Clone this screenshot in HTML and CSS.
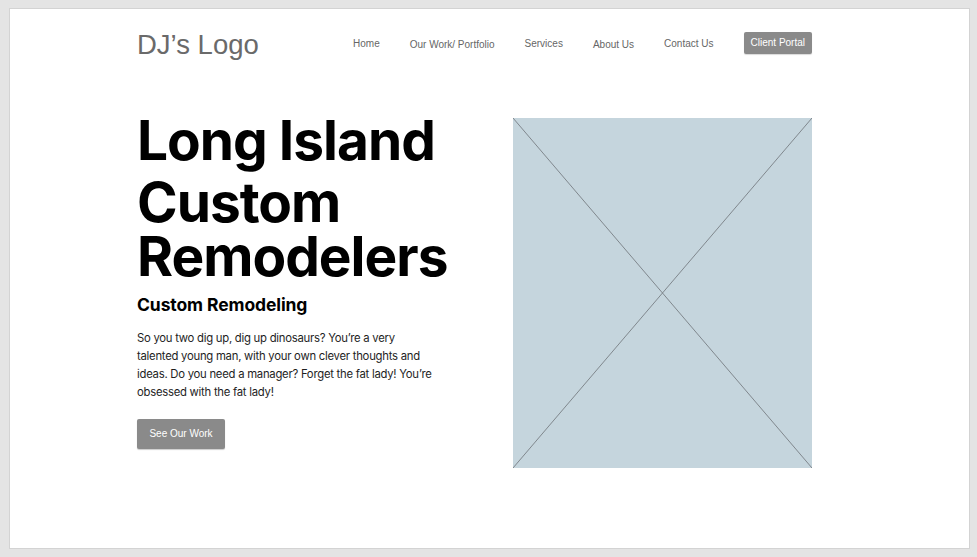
FILE: index.html
```html
<!DOCTYPE html>
<html lang="en">
<head>
<meta charset="utf-8">
<title>DJ's Logo</title>
<link rel="stylesheet" href="styles.css">
</head>
<body>
<div class="canvas">
  <div class="container">
    <header class="header">
      <div class="logo">DJ’s Logo</div>
      <nav class="nav">
        <a class="nav-link">Home</a>
        <a class="nav-link low">Our Work/ Portfolio</a>
        <a class="nav-link">Services</a>
        <a class="nav-link low">About Us</a>
        <a class="nav-link">Contact Us</a>
        <a class="nav-btn">Client Portal</a>
      </nav>
    </header>
    <main class="hero">
      <div class="hero-text">
        <h1 class="title"><span class="line1">Long Island</span><span class="line2">Custom<br>Remodelers</span></h1>
        <h2 class="subtitle">Custom Remodeling</h2>
        <p class="body">So you two dig up, dig up dinosaurs? You’re a very talented young man, with your own clever thoughts and ideas. Do you need a manager? Forget the fat lady! You’re obsessed with the fat lady!</p>
        <a class="cta">See Our Work</a>
      </div>
      <div class="placeholder">
        <svg class="cross" viewBox="0 0 299 350" preserveAspectRatio="none">
          <line x1="0" y1="0" x2="299" y2="350"/>
          <line x1="299" y1="0" x2="0" y2="350"/>
        </svg>
      </div>
    </main>
  </div>
</div>
</body>
</html>
```

FILE: styles.css
```css
html, body {
  margin: 0;
  padding: 0;
  background: #e4e4e4;
}
body {
  padding: 8px 0 0 9px;
  height: 557px;
  box-sizing: border-box;
}
.canvas {
  width: 959px;
  height: 539px;
  background: #ffffff;
  border: 1px solid #d3d3d3;
}
.container {
  width: 675px;
  margin-left: 127px;
}
.header {
  display: flex;
  align-items: center;
  justify-content: space-between;
  height: 68px;
}
.logo {
  font-family: "Liberation Sans", Arial, sans-serif;
  font-size: 27.5px;
  color: #6a6a6a;
  margin-top: 3px;
}
.nav {
  display: flex;
  align-items: center;
  gap: 30px;
  font-family: "Liberation Sans", Arial, sans-serif;
  font-size: 10px;
  color: #666666;
}
.nav-link.low {
  position: relative;
  top: 1px;
}
.nav-btn {
  background: #8a8a8a;
  color: #ffffff;
  height: 22px;
  line-height: 21px;
  padding: 0 7px;
  border-radius: 2px;
  box-shadow: 0 1px 1px rgba(0,0,0,0.15);
}
.hero {
  display: flex;
  justify-content: space-between;
  align-items: flex-start;
  margin-top: 32px;
}
.hero-text {
  width: 330px;
  font-family: Inter, "Noto Sans", sans-serif;
}
.title {
  margin: 0;
  font-weight: 700;
  font-size: 55px;
  letter-spacing: -1px;
  color: #000;
}
.line1 {
  display: block;
  line-height: 62px;
}
.line2 {
  display: block;
  line-height: 54px;
  margin-top: 4px;
}
.subtitle {
  margin: 11px 0 0;
  font-size: 17.5px;
  line-height: 21px;
  font-weight: 700;
  letter-spacing: -0.1px;
  color: #000;
}
.body {
  margin: 14px 0 0;
  width: 297px;
  font-size: 11.3px;
  line-height: 18px;
  color: #1e1e1e;
  letter-spacing: -0.25px;
}
.cta {
  display: block;
  margin-top: 18px;
  width: 88px;
  height: 30px;
  line-height: 30px;
  text-align: center;
  background: #8a8a8a;
  color: #fff;
  font-family: "Liberation Sans", Arial, sans-serif;
  font-size: 10px;
  border-radius: 2px;
  box-shadow: 0 1px 1px rgba(0,0,0,0.2);
}
.placeholder {
  width: 299px;
  height: 350px;
  background: #c5d5dd;
  margin-top: 9px;
}
.cross {
  display: block;
  width: 100%;
  height: 100%;
}
.cross line {
  stroke: #6e7478;
  stroke-width: 0.8;
}
```
